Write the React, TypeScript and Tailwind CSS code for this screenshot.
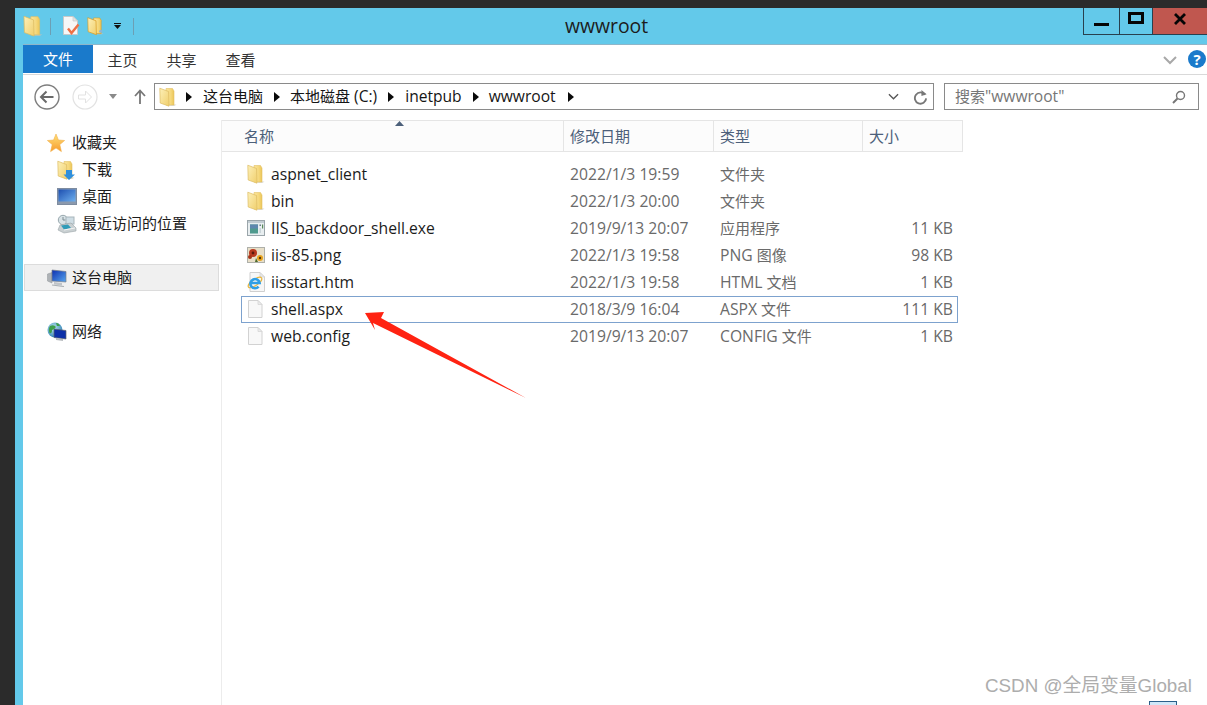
import React, { useId } from "react";

const FONT = "font-['Open_Sans','Noto_Sans_CJK_SC',sans-serif]";

function Folder({ className = "w-[18px] h-[20px]", rim = false }: { className?: string; rim?: boolean }) {
  const id = useId();
  return (
    <svg viewBox="0 0 18 20" className={"shrink-0 " + className}>
      <defs>
        <linearGradient id={id + "a"} x1="0" y1="0" x2="1" y2="0">
          <stop offset="0" stopColor="#fbe59a" />
          <stop offset="0.6" stopColor="#f5d87c" />
          <stop offset="1" stopColor="#ecc658" />
        </linearGradient>
        <linearGradient id={id + "b"} x1="0" y1="0" x2="1" y2="1">
          <stop offset="0" stopColor="#fdf0b8" />
          <stop offset="1" stopColor="#f0cf6c" />
        </linearGradient>
      </defs>
      <path d="M13 17.5 L17.5 17.5 L15.5 19 L9 19 Z" fill="#c4c4bc" opacity="0.6" />
      <path d="M7 1.5 L13.5 1.5 L15 4 L15 18 L7 18 Z" fill={`url(#${id}a)`} stroke={rim ? "#d99a1e" : "#e2c167"} strokeWidth="0.6" />
      <path d="M.8 1.2 L9.5 4.5 L10 19.2 L1.2 16 Z" fill={`url(#${id}b)`} stroke={rim ? "#d99a1e" : "#dcbc63"} strokeWidth="0.7" />
      {rim && <circle cx="14.5" cy="15.5" r="1.6" fill="#8fb3d6" />}
    </svg>
  );
}

function Doc({ className = "w-[16px] h-[18px]" }: { className?: string }) {
  return (
    <svg viewBox="0 0 16 18" className={className}>
      <path d="M1.5 .5 H11 L15 4.5 V17.5 H1.5 Z" fill="#f8f8f8" stroke="#d2d2d2" />
      <path d="M11 .5 V4.5 H15 Z" fill="#ececec" stroke="#d2d2d2" strokeWidth="0.7" />
    </svg>
  );
}

function DocCheck() {
  return (
    <svg viewBox="0 0 18 20" className="w-[18px] h-[20px] shrink-0">
      <path d="M1.5 .5 H11 L15.5 5 V18.5 H1.5 Z" fill="#f7f7f7" stroke="#c9c9c9" />
      <path d="M11 .5 V5 H15.5 Z" fill="#e5e5e5" stroke="#c9c9c9" strokeWidth="0.7" />
      <path d="M6 12.5 L9.5 17 L16.5 8.5" fill="none" stroke="#ee7046" strokeWidth="2.4" />
    </svg>
  );
}

function Star() {
  const id = useId();
  return (
    <svg viewBox="0 0 18 20" className="w-[18px] h-[20px]">
      <defs>
        <linearGradient id={id} x1="0" y1="0" x2="0" y2="1">
          <stop offset="0" stopColor="#ffe27a" />
          <stop offset="1" stopColor="#f79a2b" />
        </linearGradient>
      </defs>
      <path d="M9 1 L11.4 7 L17.6 7.5 L12.8 11.6 L14.4 18.6 L9 15 L3.6 18.6 L5.2 11.6 L.4 7.5 L6.6 7 Z" fill={`url(#${id})`} stroke="#f2b04a" strokeWidth="0.6" />
    </svg>
  );
}

function Downloads() {
  return (
    <div className="relative w-[18px] h-[20px]">
      <Folder />
      <svg viewBox="0 0 18 20" className="absolute inset-0 w-[18px] h-[20px]">
        <path d="M9 10 H15 V14.5 H18 L12 20 L6.5 14.5 H9 Z" fill="#2f8fdc" />
      </svg>
    </div>
  );
}

function Desktop() {
  const id = useId();
  return (
    <svg viewBox="0 0 20 17" className="w-[20px] h-[17px]">
      <defs>
        <linearGradient id={id} x1="0" y1="0" x2="1" y2="1">
          <stop offset="0" stopColor="#1d4fb0" />
          <stop offset="1" stopColor="#6fb0ee" />
        </linearGradient>
      </defs>
      <rect x="0.5" y="0.5" width="19" height="16" fill="#8b99ad" stroke="#7e8ca0" />
      <rect x="1.5" y="1.5" width="17" height="12" fill={`url(#${id})`} />
    </svg>
  );
}

function Recent() {
  return (
    <svg viewBox="0 0 20 20" className="w-[20px] h-[20px]">
      <circle cx="6" cy="6" r="4.7" fill="#d8e2e6" stroke="#98a8ae" />
      <path d="M6 3 V6 H8.5" fill="none" stroke="#7c8c92" />
      <rect x="9" y="3" width="8" height="7" fill="#cfdde4" stroke="#a8b5bb" />
      <path d="M3 11 L14 9 L19 14 L19 17 L7 19 L1 16 Z" fill="#c9d0d2" stroke="#9aa4a8" strokeWidth="0.6" />
      <path d="M4 11.5 L11 10.5 L14 14 L7 15.5 Z" fill="#2f9bb8" />
      <path d="M7 16 L18 14" stroke="#f3f3f3" />
    </svg>
  );
}

function Computer() {
  const id = useId();
  return (
    <svg viewBox="0 0 20 18" className="w-[20px] h-[18px]">
      <defs>
        <linearGradient id={id} x1="0" y1="0" x2="1" y2="1">
          <stop offset="0" stopColor="#0d2fb0" />
          <stop offset="1" stopColor="#58a6ee" />
        </linearGradient>
      </defs>
      <path d="M0.5 5 L5 3.5 L5 14 L0.5 12 Z" fill="#aeb2b6" stroke="#8f9498" strokeWidth="0.5" />
      <path d="M5 1 L19 2.5 L19 13 L5 12 Z" fill={`url(#${id})`} stroke="#7a8088" strokeWidth="0.7" />
      <path d="M7 13 L15 14 L15 16.5 L7 15.5 Z" fill="#c0c4c8" />
      <path d="M5 16 L17 17.5" stroke="#aab0b4" strokeWidth="1.2" />
    </svg>
  );
}

function Network() {
  const id = useId();
  return (
    <svg viewBox="0 0 20 20" className="w-[20px] h-[20px]">
      <defs>
        <radialGradient id={id} cx="0.4" cy="0.35" r="0.7">
          <stop offset="0" stopColor="#bfe6f0" />
          <stop offset="1" stopColor="#2a7fb4" />
        </radialGradient>
      </defs>
      <circle cx="8" cy="8" r="7.5" fill={`url(#${id})`} />
      <path d="M3 4 Q7 2 9 5 Q7 8 5 8 Q5 12 2.5 11 Q1 7 3 4 Z" fill="#3e9f4a" />
      <path d="M9 1 Q12 1 13 4 L10 4 Z" fill="#3e9f4a" />
      <path d="M7 7 L19 8.5 L19 17 L7 15.5 Z" fill="#0d30a8" stroke="#5e6670" strokeWidth="0.7" />
      <path d="M9 16 L16 17 L16 19 L9 18 Z" fill="#b8bcc0" />
    </svg>
  );
}

function ExeIcon() {
  return (
    <svg viewBox="0 0 18 16" className="w-[18px] h-[16px]">
      <rect x="0.5" y="0.5" width="17" height="15" fill="#e8eef0" stroke="#9aa5aa" />
      <rect x="1" y="1" width="16" height="2" fill="#c2ccd2" />
      <rect x="3" y="4.5" width="8" height="9" fill="#4f9a8e" />
      <rect x="3" y="4.5" width="8" height="4" fill="#5e87ae" />
      <rect x="12.5" y="4.5" width="1.5" height="1.5" fill="#6a7c86" />
      <rect x="15" y="4.5" width="1.2" height="4" fill="#5a8a5a" />
      <rect x="12.5" y="8" width="1.5" height="5" fill="#c9d4d8" />
    </svg>
  );
}

function PngIcon() {
  return (
    <svg viewBox="0 0 18 16" className="w-[18px] h-[16px]">
      <rect x="0.5" y="0.5" width="17" height="15" fill="#e8dfc8" stroke="#aeb0aa" />
      <circle cx="6" cy="6" r="4" fill="#b83a1e" />
      <circle cx="6" cy="6" r="1.4" fill="#5a1a0c" />
      <circle cx="3" cy="10" r="2" fill="#a53418" />
      <circle cx="13" cy="11" r="3" fill="#e8a41e" />
      <circle cx="13" cy="11" r="1.2" fill="#5a3a0c" />
      <path d="M8 15 L9 11 L11 15 Z" fill="#4e6a2a" />
    </svg>
  );
}

function IeIcon() {
  return (
    <svg viewBox="0 0 18 20" className="w-[18px] h-[20px]">
      <path d="M3 .5 H13 L17.5 5 V19.5 H3 Z" fill="#f7f7f7" stroke="#cfcfcf" />
      <path d="M13 .5 V5 H17.5 Z" fill="#e8e8e8" stroke="#cfcfcf" strokeWidth="0.6" />
      <ellipse cx="8" cy="10.5" rx="8" ry="3" transform="rotate(-35 8 10.5)" fill="none" stroke="#e9b63c" strokeWidth="1.1" />
      <path d="M3.4 11 H12.6 A4.6 4.6 0 1 0 11.6 14.6" fill="none" stroke="#2f9fe6" strokeWidth="2.6" />
    </svg>
  );
}

function Tri({ className = "" }: { className?: string }) {
  return (
    <svg viewBox="0 0 6 10" className={"w-[6px] h-[10px] shrink-0 " + className}>
      <path d="M0 0 L6 5 L0 10 Z" fill="#0a0a0a" />
    </svg>
  );
}

function Cjk({ children }: { children: React.ReactNode }) {
  return <span className="text-[15px]">{children}</span>;
}

const files = [
  { name: "aspnet_client", date: "2022/1/3 19:59", latin: "", cjk: "文件夹", size: "", icon: <Folder /> },
  { name: "bin", date: "2022/1/3 20:00", latin: "", cjk: "文件夹", size: "", icon: <Folder /> },
  { name: "IIS_backdoor_shell.exe", date: "2019/9/13 20:07", latin: "", cjk: "应用程序", size: "11 KB", icon: <ExeIcon /> },
  { name: "iis-85.png", date: "2022/1/3 19:58", latin: "PNG ", cjk: "图像", size: "98 KB", icon: <PngIcon /> },
  { name: "iisstart.htm", date: "2022/1/3 19:58", latin: "HTML ", cjk: "文档", size: "1 KB", icon: <IeIcon /> },
  { name: "shell.aspx", date: "2018/3/9 16:04", latin: "ASPX ", cjk: "文件", size: "111 KB", icon: <Doc />, selected: true },
  { name: "web.config", date: "2019/9/13 20:07", latin: "CONFIG ", cjk: "文件", size: "1 KB", icon: <Doc /> },
];

function NavItem({ icon, label, indent, selected }: { icon: React.ReactNode; label: string; indent?: boolean; selected?: boolean }) {
  return (
    <div className={"h-[27px] flex items-center text-[15px] text-[#1c1c1c] " + (selected ? "bg-[#f0f0f0] border border-[#dcdcdc] ml-px mr-[2px] pl-[22px]" : indent ? "pl-[34px]" : "pl-[24px]")}>
      <span className="w-[25px] h-[20px] flex items-center shrink-0">{icon}</span>
      <span className="pb-px">{label}</span>
    </div>
  );
}

export default function App() {
  return (
    <div className={"relative w-[1207px] h-[705px] overflow-hidden bg-[#2b2b2b] pt-2 pl-[15px] " + FONT}>
      <div className="h-full bg-[#63c9ea] flex flex-col">
        {/* Title bar */}
        <div className="h-[36px] flex items-start shrink-0">
          <div className="w-[115px] h-[36px] flex items-center pl-2 shrink-0">
            <Folder className="w-[20px] h-[22px]" />
            <span className="w-px h-[17px] bg-[#6c9fb4] ml-[7px] shrink-0" />
            <span className="ml-[11px] flex shrink-0"><DocCheck /></span>
            <span className="ml-[7px] flex shrink-0"><Folder rim className="w-[17px] h-[20px]" /></span>
            <svg viewBox="0 0 7 6" className="w-[7px] h-[6px] ml-[10px] shrink-0">
              <path d="M0 0 H7 V1 H0 Z M0 2 H7 L3.5 6 Z" fill="#101010" />
            </svg>
            <span className="w-px h-[17px] bg-[#6c9fb4] ml-[12px] shrink-0" />
          </div>
          <div className="flex-1 h-[36px] flex items-center justify-center text-[19.4px] text-[#1c1c1c]">wwwroot</div>
          <div className="flex h-[27px] w-[124px] shrink-0">
            <div className="w-[36px] border-l border-b border-[#28404e] flex items-end justify-center pb-[8px]">
              <span className="w-[15px] h-[3px] bg-[#050505]" />
            </div>
            <div className="w-[33px] border-l border-b border-[#28404e] flex items-center justify-center pb-[6px]">
              <span className="w-[16px] h-[12px] border-[3px] border-[#050505]" />
            </div>
            <div className="flex-1 bg-[#c0574f] border-l border-b border-[#28404e] flex items-center justify-center pb-[4px]">
              <svg viewBox="0 0 12 12" className="w-[12px] h-[12px]">
                <path d="M1 1 L11 11 M11 1 L1 11" stroke="#050505" strokeWidth="2.8" />
              </svg>
            </div>
          </div>
        </div>

        {/* Right content of window */}
        <div className="flex-1 ml-2 bg-white flex flex-col min-h-0 border-t border-[#8fb6c9]">
          {/* Ribbon */}
          <div className="h-[30px] flex items-stretch border-b border-[#d9d9d9] shrink-0">
            <div className="w-[70px] h-[28px] bg-[#1a7acb] text-white text-[15px] flex items-center justify-center">文件</div>
            <div className="w-[59px] pt-px flex items-center justify-center text-[15px] text-[#333]">主页</div>
            <div className="w-[59px] pt-px flex items-center justify-center text-[15px] text-[#333]">共享</div>
            <div className="w-[59px] pt-px flex items-center justify-center text-[15px] text-[#333]">查看</div>
            <div className="flex-1" />
            <div className="flex items-center pb-[1px]">
              <svg viewBox="0 0 14 9" className="w-[14px] h-[9px] mr-[11px] mt-[2px]">
                <path d="M1 1 L7 7 L13 1" fill="none" stroke="#a8a8a8" strokeWidth="2" />
              </svg>
              <span className="w-[18px] h-[18px] mr-px rounded-full bg-[#1a7acb] text-white text-[15px] font-bold leading-none flex items-center justify-center">?</span>
            </div>
          </div>

          {/* Navigation bar */}
          <div className="h-[45px] flex items-start pt-[8px] shrink-0">
            <div className="w-[131px] h-[27px] flex items-center pl-[11px] shrink-0">
              <svg viewBox="0 0 26 26" className="w-[26px] h-[26px]">
                <circle cx="13" cy="13" r="12" fill="none" stroke="#7e7e7e" strokeWidth="1.4" />
                <path d="M19.5 13 H7.5 M12.5 7.5 L7 13 L12.5 18.5" fill="none" stroke="#6a6a6a" strokeWidth="2" />
              </svg>
              <svg viewBox="0 0 26 26" className="w-[26px] h-[26px] ml-[12px]">
                <circle cx="13" cy="13" r="12" fill="none" stroke="#e2e2e2" strokeWidth="1.2" />
                <path d="M6.5 11 H13.5 V7 L19.5 13 L13.5 19 V15 H6.5 Z" fill="none" stroke="#e2e2e2" />
              </svg>
              <svg viewBox="0 0 8 5" className="w-[8px] h-[5px] ml-[11px]">
                <path d="M0 0 H8 L4 5 Z" fill="#8a8a8a" />
              </svg>
              <svg viewBox="0 0 12 15" className="w-[12px] h-[15px] ml-[17px]">
                <path d="M6 15 V2 M1 7 L6 1.5 L11 7" fill="none" stroke="#777" strokeWidth="1.8" />
              </svg>
            </div>
            <div className="w-[780px] h-[27px] border border-[#8a8a8a] flex items-center pl-[4px] text-[15.6px] text-[#151515] shrink-0 whitespace-pre">
              <Folder className="w-[18px] h-[20px]" />
              <Tri className="ml-[9px]" />
              <span className="ml-[11px] text-[15px]">这台电脑</span>
              <Tri className="ml-[11px]" />
              <span className="ml-[10px]"><Cjk>本地磁盘</Cjk> (C:)</span>
              <Tri className="ml-[11px]" />
              <span className="ml-[11px]">inetpub</span>
              <Tri className="ml-[11px]" />
              <span className="ml-[10px]">wwwroot</span>
              <Tri className="ml-[12px]" />
              <div className="flex-1" />
              <svg viewBox="0 0 12 7" className="w-[11px] h-[7px] mr-[14px]">
                <path d="M1 1 L6 6 L11 1" fill="none" stroke="#555" strokeWidth="1.4" />
              </svg>
              <svg viewBox="0 0 16 16" className="w-[15px] h-[16px] mr-[5px]">
                <path d="M12.8 5.5 A6 6 0 1 0 14 9.5" fill="none" stroke="#777" strokeWidth="2" />
                <path d="M9 .5 L9 7 L14.5 5 Z" fill="#777" />
              </svg>
            </div>
            <div className="w-[255px] h-[27px] ml-[10px] border border-[#8a8a8a] flex items-center pl-[10px] pr-[12px] text-[15.6px] text-[#767676] shrink-0">
              <span className="flex-1"><Cjk>搜索</Cjk>"wwwroot"</span>
              <svg viewBox="0 0 14 14" className="w-[14px] h-[14px]">
                <circle cx="8.5" cy="5.5" r="4" fill="none" stroke="#777" strokeWidth="1.4" />
                <path d="M5.5 8.5 L1 13" stroke="#777" strokeWidth="2" />
              </svg>
            </div>
          </div>

          {/* Body */}
          <div className="flex-1 flex min-h-0">
            <div className="w-[199px] border-r border-[#ececec] pt-[9px] shrink-0">
              <NavItem icon={<Star />} label="收藏夹" />
              <NavItem indent icon={<Downloads />} label="下载" />
              <NavItem indent icon={<Desktop />} label="桌面" />
              <NavItem indent icon={<Recent />} label="最近访问的位置" />
              <div className="h-[27px]" />
              <NavItem selected icon={<Computer />} label="这台电脑" />
              <div className="h-[27px]" />
              <NavItem icon={<Network />} label="网络" />
            </div>

            <div className="flex-1 min-w-0">
              <div className="w-[741px] h-[32px] flex text-[15px] text-[#4c607a] bg-[#fcfcfc] border-t border-b border-r border-[#e5e5e5]">
                <div className="relative w-[341px] pl-[22px] flex items-center">
                  名称
                  <svg viewBox="0 0 9 5" className="absolute left-[173px] top-0 w-[9px] h-[5px]">
                    <path d="M4.5 0 L9 5 H0 Z" fill="#4c607a" />
                  </svg>
                </div>
                <div className="w-[150px] pl-[6px] flex items-center border-l border-[#e5e5e5]">修改日期</div>
                <div className="w-[149px] pl-[6px] flex items-center border-l border-[#e5e5e5]">类型</div>
                <div className="flex-1 pl-[6px] flex items-center border-l border-[#e5e5e5]">大小</div>
              </div>
              <div className="pt-[9px] pl-[19px]">
                {files.map((f) => (
                  <div key={f.name} className={"w-[717px] h-[27px] flex items-center text-[15.7px] border " + (f.selected ? "border-[#7da2ce]" : "border-transparent")}>
                    <div className="w-[321px] pl-[5px] flex items-center shrink-0 text-[#1c1c1c]">
                      <span className="w-[24px] h-[20px] flex items-center shrink-0">{f.icon}</span>
                      {f.name}
                    </div>
                    <div className="w-[150px] pl-[7px] shrink-0 text-[#6a6a6a]">{f.date}</div>
                    <div className="w-[149px] pl-[7px] shrink-0 text-[#6a6a6a] whitespace-pre">{f.latin}<Cjk>{f.cjk}</Cjk></div>
                    <div className="flex-1 pr-[4px] text-right text-[#6a6a6a]">{f.size}</div>
                  </div>
                ))}
              </div>
            </div>
          </div>
        </div>
      </div>

      {/* Red annotation arrow */}
      <svg viewBox="0 0 1207 705" className="absolute inset-0 w-[1207px] h-[705px] pointer-events-none">
        <path d="M365 313 L384 312 L381 318 L526 398 L373 323 L375 330 Z" fill="#ff2312" />
      </svg>

      {/* Watermark */}
      <div className="absolute left-[985px] top-[674px] text-[18.8px] leading-[24px] text-[#adadad] font-['Liberation_Sans','Noto_Sans_CJK_SC',sans-serif] whitespace-nowrap">CSDN @全局变量Global</div>
      <div className="absolute left-[1149px] top-[701px] w-[28px] h-[4px] bg-[#cfe7f8] border-t border-l border-r border-[#2a5f8a]" />
    </div>
  );
}
